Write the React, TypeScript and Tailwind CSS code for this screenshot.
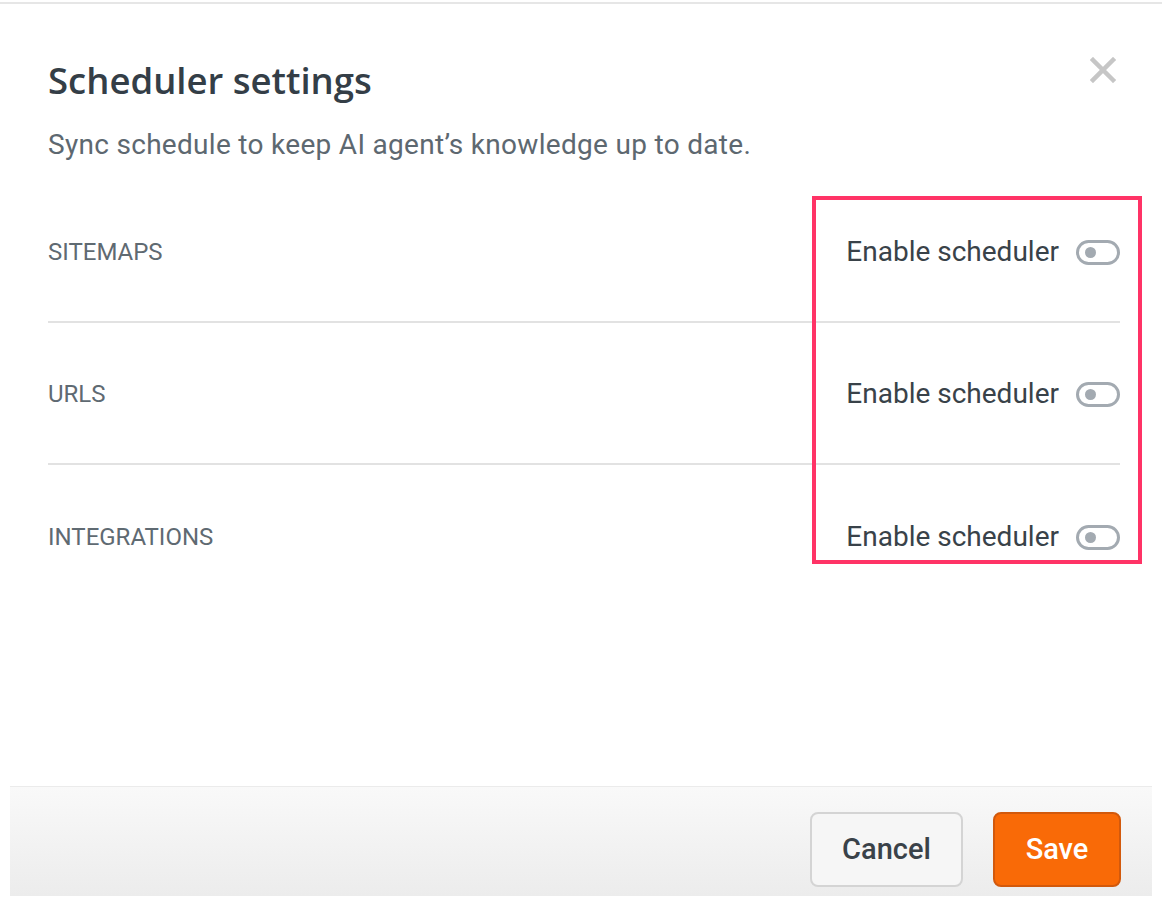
import React from 'react';

const SECTIONS = ['SITEMAPS', 'URLS', 'INTEGRATIONS'];

function Toggle() {
  return (
    <button
      type="button"
      className="flex h-[25px] w-[44px] items-center rounded-full border-[3px] border-[#a3aab1] bg-white"
    >
      <span className="ml-[6px] h-[11px] w-[11px] rounded-full bg-[#a3aab1]" />
    </button>
  );
}

export default function App() {
  return (
    <div
      className="relative h-[912px] w-[1162px] overflow-hidden bg-white"
      style={{ fontFamily: 'Roboto, "Liberation Sans", sans-serif' }}
    >
      <div className="mt-[2px] h-[2px] w-full bg-[#e6e6e6]" />

      {/* Header */}
      <div className="flex items-start justify-between pl-[48px] pr-[46px] pt-[52px]">
        <h2
          className="text-[36.5px] font-semibold leading-[48px] text-[#343e47]"
          style={{ fontFamily: '"Open Sans", "Noto Sans", sans-serif' }}
        >
          Scheduler settings
        </h2>
        <button type="button" className="mt-[1px]">
          <svg width="26" height="26" viewBox="0 0 26 26">
            <path d="M3 3 L23 23 M23 3 L3 23" stroke="#c6c6c6" strokeWidth="4.5" strokeLinecap="square" />
          </svg>
        </button>
      </div>
      <p className="mt-[23px] px-[48px] text-[28px] leading-[36px] tracking-[0.3px] text-[#5d6870]">
        Sync schedule to keep AI agent’s knowledge up to date.
      </p>

      {/* Sections */}
      <div className="mx-[48px] mt-[18px] w-[1072px]">
        {SECTIONS.map((s, i) => (
          <div
            key={s}
            className={`flex h-[142px] items-center justify-between pt-[2px] ${
              i < SECTIONS.length - 1 ? 'border-b-2 border-[#e2e2e2]' : ''
            }`}
          >
            <span className="text-[24px] text-[#5f6a72]">{s}</span>
            <div className="flex items-center gap-[17px]">
              <span className="text-[28px] text-[#394249]">Enable scheduler</span>
              <Toggle />
            </div>
          </div>
        ))}
      </div>

      {/* Footer */}
      <div className="mx-[10px] mt-[179px] flex h-[110px] w-[1142px] items-start justify-end gap-[30px] border-t border-[#ebebeb] bg-gradient-to-b from-[#f9f9f9] to-[#ececec] pr-[31px] pt-[25px]">
        <button
          type="button"
          className="h-[75px] w-[153px] rounded-[8px] border-2 border-[#d4d4d4] bg-[#f6f6f6] text-[29px] font-medium text-[#3a4249]"
        >
          Cancel
        </button>
        <button
          type="button"
          className="h-[75px] w-[128px] rounded-[8px] border-2 border-[#d2590c] bg-[#f96a07] text-[29px] font-medium text-white"
        >
          Save
        </button>
      </div>

      {/* Highlight annotation */}
      <div className="pointer-events-none absolute left-[812px] top-[196px] h-[368px] w-[330px] border-[4px] border-[#ff3366]" />
    </div>
  );
}
